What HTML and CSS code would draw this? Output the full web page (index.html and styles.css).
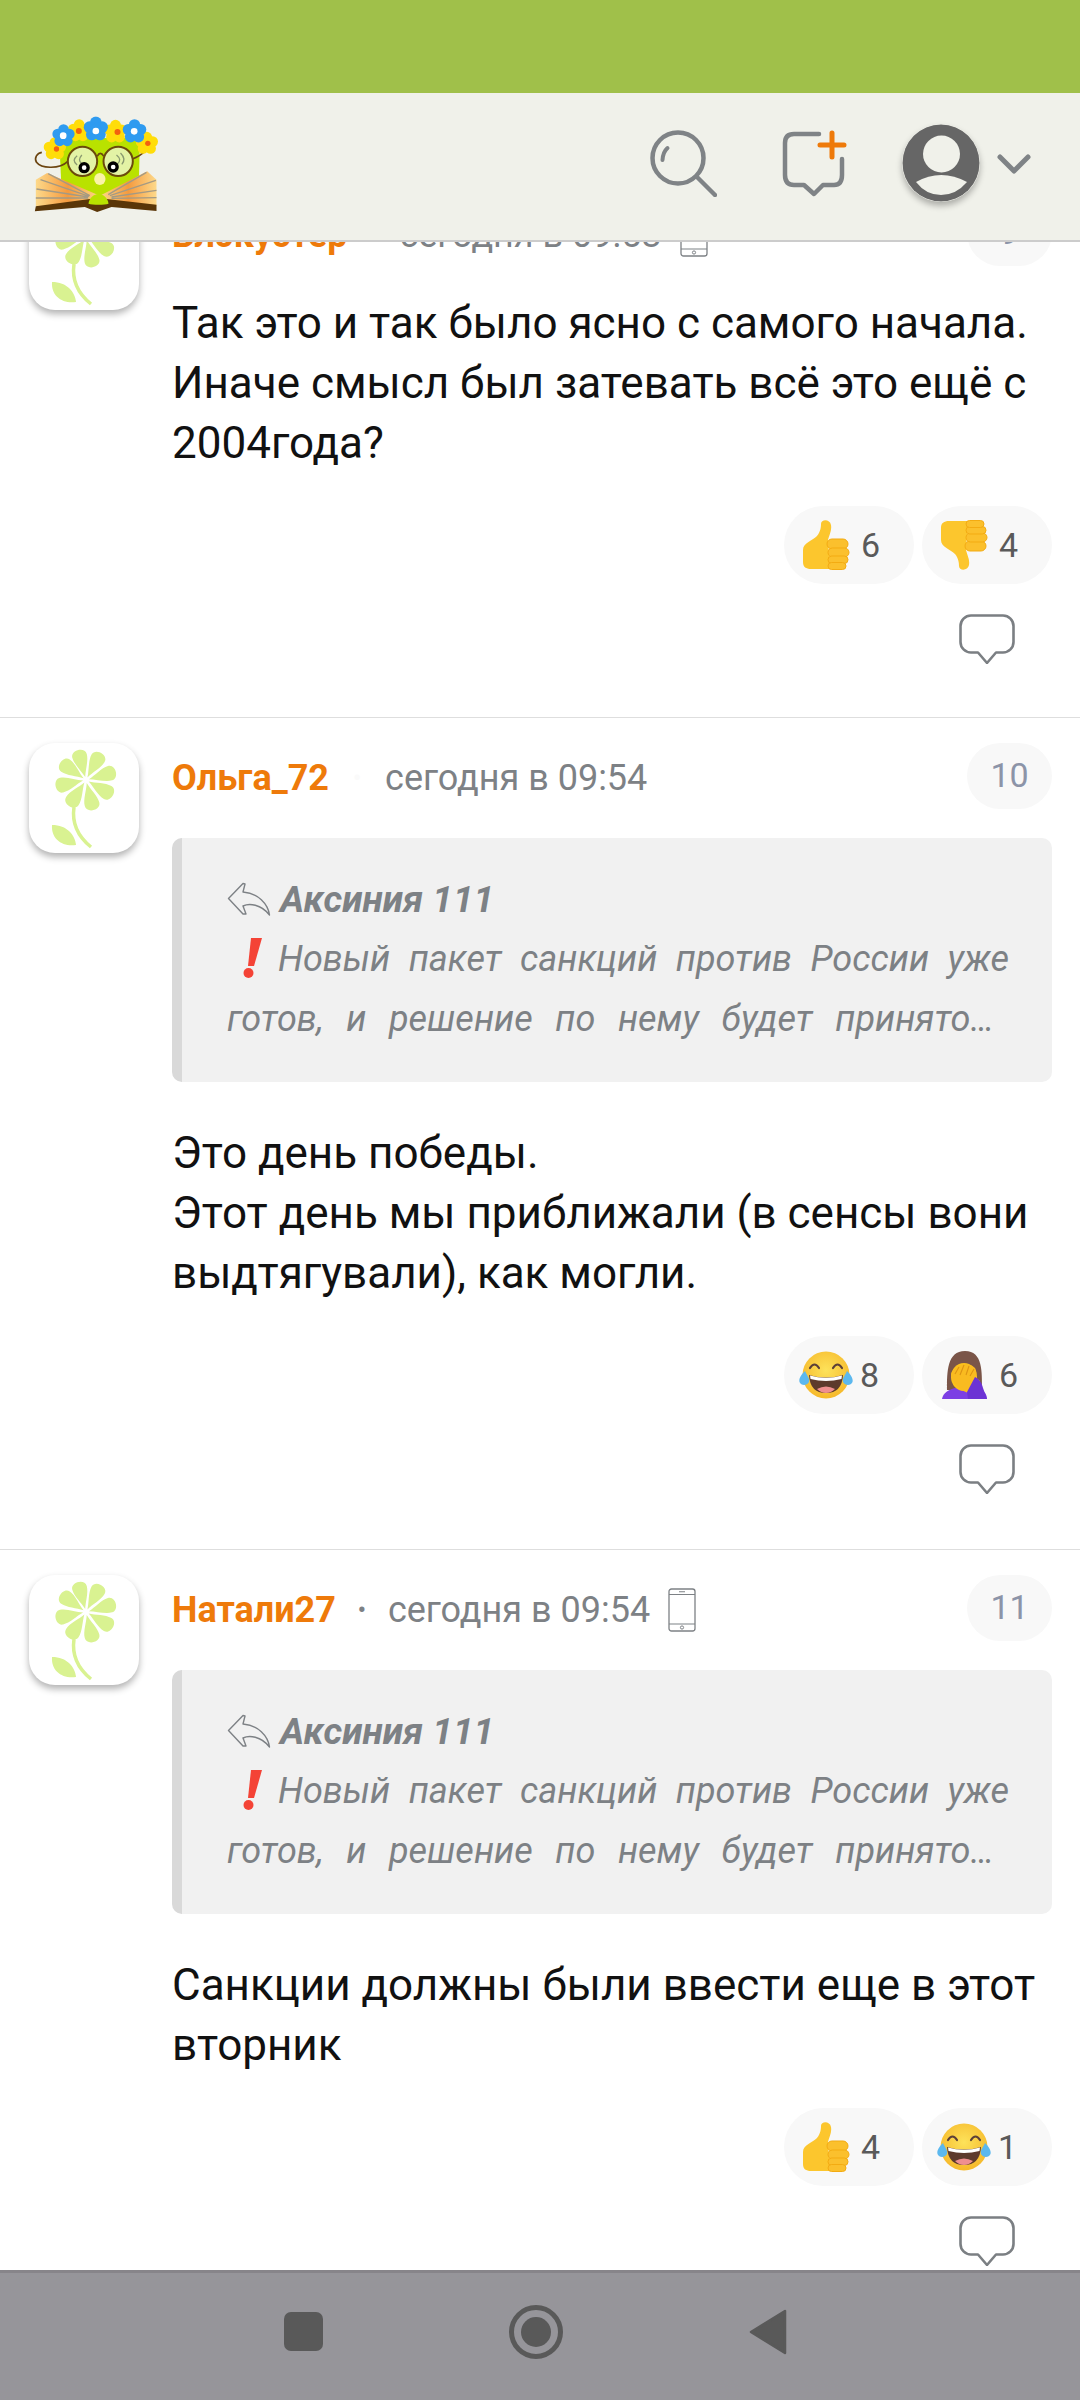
FILE: index.html
```html
<!DOCTYPE html>
<html lang="ru">
<head>
<meta charset="utf-8">
<title>Комментарии</title>
<link rel="stylesheet" href="styles.css">
</head>
<body>
<svg class="sprite" aria-hidden="true">
  <defs>
    <path id="petal" d="M0-3C-2-10-7.500-18-7.500-25-7.500-33 7.500-33 7.500-25 7.500-18 2-10 0-3Z"/>
    <symbol id="flower" viewBox="0 0 110 110">
      <g transform="translate(57 37)" fill="#d9f291">
        <use href="#petal" transform="rotate(-15)"/>
        <use href="#petal" transform="rotate(29)"/>
        <use href="#petal" transform="rotate(74)"/>
        <use href="#petal" transform="rotate(120)"/>
        <use href="#petal" transform="rotate(166)"/>
        <use href="#petal" transform="rotate(213)"/>
        <use href="#petal" transform="rotate(258)"/>
        <use href="#petal" transform="rotate(305)"/>
      </g>
      <path d="M45 64C43 78 47 92 62 104" fill="none" stroke="#d9f291" stroke-width="3.500"/>
      <path d="M23 82C38 82 46 92 47 102 33 104 22 96 23 82Z" fill="#d9f291"/>
    </symbol>

    <g id="hand">
      <path d="M1 30C1 23 10 21 15 16 19 11 19 6 19 4 19-1 28-1 29 5 30 11 27 15 26 20L28 49 9 49C4 49 1 47 1 42Z" fill="#fcc62d"/>
      <g fill="#fbc02d" stroke="#f3ab12" stroke-width="1">
        <rect x="25" y="19" width="21" height="10" rx="5"/>
        <rect x="26" y="28" width="21" height="9" rx="4.500"/>
        <rect x="26" y="36" width="20" height="7.500" rx="3.700"/>
        <rect x="26" y="42.500" width="18" height="7" rx="3.500"/>
      </g>
    </g>
    <symbol id="thumb" viewBox="0 0 48 50">
      <use href="#hand"/>
    </symbol>
    <symbol id="thumb-down" viewBox="0 0 48 50">
      <use href="#hand" transform="translate(0 50) scale(1 -1)"/>
    </symbol>

    <radialGradient id="joyface" cx="50%" cy="40%" r="60%">
      <stop offset="0" stop-color="#fde25a"/>
      <stop offset="1" stop-color="#f6b92b"/>
    </radialGradient>
    <symbol id="joy" viewBox="0 0 54 48">
      <circle cx="27" cy="24" r="23.500" fill="url(#joyface)"/>
      <path d="M11 17Q15.500 10 20 17M34 17Q38.500 10 43 17" fill="none" stroke="#5d4037" stroke-width="2.200" stroke-linecap="round"/>
      <path d="M10 24Q27 29 44 24 43 42 27 42 11 42 10 24Z" fill="#5d3a2c"/>
      <path d="M11 24.500Q27 29 43 24.500L42.500 28Q27 32 11.500 28Z" fill="#fff"/>
      <path d="M18 38Q27 33 36 38 32 42 27 42 22 42 18 38Z" fill="#ef8f8f"/>
      <path d="M6 20C8 25 11 27 10 31 8 35 2 35 .5 31-.5 27 3 23 6 20Z" fill="#5cb8ee"/>
      <path d="M48 20C46 25 43 27 44 31 46 35 52 35 53.500 31 54.500 27 51 23 48 20Z" fill="#5cb8ee"/>
    </symbol>

    <symbol id="facepalm" viewBox="0 0 46 50">
      <path d="M5 40C5 22 5 1 23 1 41 1 40 22 40 40Z" fill="#7a5548"/>
      <path d="M0 49C1 43 6 40 13 38H30L40 40C43 42 45 45 45 49Z" fill="#7c3fe4"/>
      <ellipse cx="22" cy="27" rx="13" ry="14" fill="#fcc21b"/>
      <path d="M9 24C12 15 26 11 33 18 36 23 33 29 30 33L22 41 15 36C12 33 9 29 9 24Z" fill="#f9bb20"/>
      <path d="M13 24 17 17M18 25 22 15M24 25 27 16M28 26 32 19" stroke="#dd9413" stroke-width="1.100" fill="none"/>
      <path d="M17 39 33 27 38 31 26 43Z" fill="#f9bb20"/>
      <path d="M33 27C37 29 40 33 41 38L45 49H26L25 42Z" fill="#6c33d4"/>
    </symbol>

    <symbol id="alert" viewBox="0 0 20 42">
      <path d="M8 1 19 1 11 29 5 29Z" fill="#f44336"/>
      <circle cx="5.500" cy="36" r="5" fill="#f44336"/>
    </symbol>

    <symbol id="reply" viewBox="0 0 44 34">
      <path d="M16 1.500 1.500 16.500 16 32 19 32 16 24C22 21 34 22 42.500 33 41 22 31 11 16 10L18 2Z" fill="none" stroke="#7d8185" stroke-width="1.400" stroke-linejoin="round"/>
    </symbol>

    <symbol id="phone" viewBox="0 0 28 44">
      <rect x="1" y="1" width="26" height="42" rx="2.500" fill="none" stroke="#7d8185" stroke-width="1.300"/>
      <path d="M1 6.500H27M1 36H27M11 3.700H17" stroke="#7d8185" stroke-width="1.100" fill="none"/>
      <circle cx="14" cy="39.500" r="1.600" fill="none" stroke="#7d8185" stroke-width="1"/>
    </symbol>

    <symbol id="bubble" viewBox="0 0 56 50">
      <path d="M12 1.500H44A10.500 10.500 0 0 1 54.500 12V28A10.500 10.500 0 0 1 44 38.500H37L28 49 19 38.500H12A10.500 10.500 0 0 1 1.500 28V12A10.500 10.500 0 0 1 12 1.500Z" fill="none" stroke="#7b7f83" stroke-width="2.600" stroke-linejoin="round"/>
    </symbol>

    <symbol id="bloom" viewBox="-34 -34 68 68">
      <circle cx="0" cy="-18" r="15.500"/>
      <circle cx="17" cy="-5" r="15.500"/>
      <circle cx="11" cy="15" r="15.500"/>
      <circle cx="-11" cy="15" r="15.500"/>
      <circle cx="-17" cy="-5" r="15.500"/>
      <circle cx="0" cy="0" r="15"/>
    </symbol>
  </defs>
</svg>

<div class="app">
  <div class="status-bar"></div>

  <header class="topbar">
    <svg class="logo" viewBox="100 150 380 300" role="img" aria-label="Логотип">
      <defs>
        <linearGradient id="pageglow" x1="0" y1="0" x2="1" y2="0">
          <stop offset="0" stop-color="#fdd98a"/>
          <stop offset=".5" stop-color="#f59a3e"/>
          <stop offset="1" stop-color="#fdd98a"/>
        </linearGradient>
      </defs>
      <path d="M178 225H408Q420 225 420 240L416 400H186Z" fill="#b9e200"/>
      <path d="M204 295C180 318 125 318 110 298 102 284 112 270 126 268" fill="none" stroke="#6b4410" stroke-width="5"/>
      <path d="M398 288Q420 280 436 264" fill="none" stroke="#6b4410" stroke-width="5"/>
      <circle cx="248" cy="295" r="44" fill="#e3f3a5" stroke="#6b4a0c" stroke-width="6"/>
      <circle cx="355" cy="295" r="44" fill="#e3f3a5" stroke="#6b4a0c" stroke-width="6"/>
      <path d="M292 280Q301 262 312 280" fill="none" stroke="#6b4a0c" stroke-width="5"/>
      <path d="M232 278Q214 292 232 306M246 276Q232 292 246 302M350 276Q368 290 352 304M362 270Q380 288 366 304" fill="none" stroke="#8a9a70" stroke-width="4"/>
      <circle cx="253" cy="314" r="17" fill="#000"/>
      <circle cx="253" cy="314" r="7" fill="#fff"/>
      <circle cx="340" cy="312" r="17" fill="#000"/>
      <circle cx="340" cy="312" r="7" fill="#fff"/>
      <path d="M108 350 142 330 300 398 270 425 108 430Z" fill="url(#pageglow)"/>
      <path d="M470 350 442 325 300 398 320 425 470 430Z" fill="url(#pageglow)"/>
      <path d="M145 332 270 398M122 350 268 400M110 378 265 402M108 405 265 405M440 328 325 395M468 352 330 398M470 382 335 402M470 404 335 406" stroke="#a49a84" stroke-width="4" fill="none"/>
      <ellipse cx="300" cy="348" rx="17" ry="18" fill="#fbf3a8"/>
      <path d="M105 445 108 430 270 408 320 408 470 425V444L335 432 292 447 255 432Z" fill="#5a3608"/>
      <path d="M266 422C268 405 282 393 296 393 310 393 324 405 326 422 315 426 278 426 266 422Z" fill="#b9e200"/>
      <g fill="#ffdd0a">
        <use href="#bloom" x="130" y="222" width="70" height="70"/>
        <use href="#bloom" x="203" y="168" width="70" height="70"/>
        <use href="#bloom" x="311" y="168" width="72" height="76"/>
        <use href="#bloom" x="406" y="202" width="70" height="78"/>
      </g>
      <g fill="#2f9bf0">
        <use href="#bloom" x="156" y="183" width="70" height="70"/>
        <use href="#bloom" x="250" y="160" width="76" height="76"/>
        <use href="#bloom" x="366" y="168" width="76" height="74"/>
      </g>
      <g fill="#f2610f">
        <circle cx="170" cy="258" r="8"/><circle cx="237" cy="204" r="9"/><circle cx="353" cy="207" r="9"/><circle cx="444" cy="241" r="8"/>
      </g>
      <g fill="#fff">
        <circle cx="190" cy="218" r="10"/><circle cx="288" cy="204" r="10"/><circle cx="403" cy="205" r="10"/>
      </g>
    </svg>

    <div class="topbar-actions">
      <svg class="ic-search" viewBox="0 0 67 67" aria-label="Поиск">
        <circle cx="28" cy="28" r="25.500" fill="none" stroke="#7f8386" stroke-width="4.500"/>
        <path d="M47 47 65 65" stroke="#7f8386" stroke-width="4.500" stroke-linecap="round"/>
        <path d="M17.500 18Q13 22 12.500 30" fill="none" stroke="#7f8386" stroke-width="4" stroke-linecap="round"/>
      </svg>
      <svg class="ic-add" viewBox="0 0 66 68" aria-label="Новая запись">
        <path d="M37 4H12Q3 4 3 13V45Q3 55 12 55H22L32 64 41 55H52Q60 55 60 45V29" fill="none" stroke="#7f8386" stroke-width="4.500" stroke-linecap="round" stroke-linejoin="round"/>
        <path d="M38 15H62M50 3V27" stroke="#ee7a0a" stroke-width="5" stroke-linecap="round"/>
      </svg>
      <svg class="ic-user" viewBox="0 0 78 78" aria-label="Профиль">
        <circle cx="39" cy="39" r="38.500" fill="#666"/>
        <circle cx="39.500" cy="30" r="18.500" fill="#f0f1ea"/>
        <path d="M14 58Q39 44 65 58 54 71 39 71 24 71 14 58Z" fill="#f0f1ea"/>
      </svg>
      <svg class="ic-chevron" viewBox="0 0 34 20" aria-hidden="true">
        <path d="M3 3 17 17 31 3" fill="none" stroke="#7f8386" stroke-width="5" stroke-linecap="round" stroke-linejoin="round"/>
      </svg>
    </div>
  </header>

  <main class="feed">
    <article class="comment comment-first">
      <svg class="avatar"><use href="#flower"/></svg>
      <div class="content">
        <div class="meta">
          <span class="author">Блэкустер</span>
          <span class="dot dot-faint">•</span>
          <span class="time">сегодня в 09:53</span>
          <svg class="device"><use href="#phone"/></svg>
          <span class="number">9</span>
        </div>
        <p class="text">Так это и так было ясно с самого начала.<br>Иначе смысл был затевать всё это ещё с 2004года?</p>
        <div class="reactions">
          <span class="pill"><svg class="emoji"><use href="#thumb"/></svg><span class="count">6</span></span>
          <span class="pill"><svg class="emoji"><use href="#thumb-down"/></svg><span class="count">4</span></span>
        </div>
        <svg class="reply-bubble"><use href="#bubble"/></svg>
      </div>
    </article>

    <article class="comment">
      <svg class="avatar"><use href="#flower"/></svg>
      <div class="content">
        <div class="meta">
          <span class="author">Ольга_72</span>
          <span class="dot dot-faint dot-wide">•</span>
          <span class="time">сегодня в 09:54</span>
          <span class="number">10</span>
        </div>
        <blockquote class="quote">
          <div class="quote-head"><svg class="quote-arrow"><use href="#reply"/></svg><b>Аксиния 111</b></div>
          <p class="quote-text">
            <span class="quote-line"><svg class="alert"><use href="#alert"/></svg>Новый пакет санкций против России уже</span>
            <span class="quote-line quote-line-last">готов, и решение по нему будет принято…</span>
          </p>
        </blockquote>
        <p class="text">Это день победы.<br>Этот день мы приближали (в сенсы вони выдтягували), как могли.</p>
        <div class="reactions">
          <span class="pill"><svg class="emoji emoji-wide"><use href="#joy"/></svg><span class="count">8</span></span>
          <span class="pill"><svg class="emoji emoji-palm"><use href="#facepalm"/></svg><span class="count">6</span></span>
        </div>
        <svg class="reply-bubble"><use href="#bubble"/></svg>
      </div>
    </article>

    <article class="comment">
      <svg class="avatar"><use href="#flower"/></svg>
      <div class="content">
        <div class="meta">
          <span class="author">Натали27</span>
          <span class="dot">•</span>
          <span class="time">сегодня в 09:54</span>
          <svg class="device"><use href="#phone"/></svg>
          <span class="number">11</span>
        </div>
        <blockquote class="quote">
          <div class="quote-head"><svg class="quote-arrow"><use href="#reply"/></svg><b>Аксиния 111</b></div>
          <p class="quote-text">
            <span class="quote-line"><svg class="alert"><use href="#alert"/></svg>Новый пакет санкций против России уже</span>
            <span class="quote-line quote-line-last">готов, и решение по нему будет принято…</span>
          </p>
        </blockquote>
        <p class="text">Санкции должны были ввести еще в этот вторник</p>
        <div class="reactions">
          <span class="pill"><svg class="emoji"><use href="#thumb"/></svg><span class="count">4</span></span>
          <span class="pill"><svg class="emoji emoji-wide"><use href="#joy"/></svg><span class="count">1</span></span>
        </div>
        <svg class="reply-bubble"><use href="#bubble"/></svg>
      </div>
    </article>
  </main>

  <nav class="navbar">
    <span class="nav-square"></span>
    <span class="nav-home"></span>
    <svg class="nav-back" viewBox="0 0 38 46" aria-label="Назад"><path d="M36 2V44L2 23Z" fill="#595959" stroke="#595959" stroke-width="2.500" stroke-linejoin="round"/></svg>
  </nav>
</div>
</body>
</html>
```

FILE: styles.css
```css
* { box-sizing: border-box; }

html, body {
  margin: 0;
  padding: 0;
  background: #fff;
}

body {
  font-family: Roboto, "Noto Sans", sans-serif;
  color: #111;
}

.sprite {
  position: absolute;
  width: 0;
  height: 0;
}

.app {
  width: 1080px;
  height: 2400px;
  display: flex;
  flex-direction: column;
  overflow: hidden;
}

.status-bar {
  flex: 0 0 93px;
  background: #a0c04a;
}

.topbar {
  flex: 0 0 149px;
  position: relative;
  z-index: 2;
  display: flex;
  align-items: flex-start;
  padding: 20px 49px 0 33px;
  background: #f0f1ea;
  border-bottom: 2px solid #ccc;
}

.logo {
  width: 127px;
  height: 100px;
}

.topbar-actions {
  margin-left: auto;
  display: flex;
  align-items: flex-start;
}

.ic-search {
  width: 67px;
  height: 67px;
  margin-top: 17px;
}

.ic-add {
  width: 66px;
  height: 68px;
  margin: 17px 0 0 65px;
}

.ic-user {
  width: 78px;
  height: 78px;
  margin: 11px 0 0 54px;
  border-radius: 50%;
  box-shadow: 0 4px 6px rgba(0, 0, 0, .28);
}

.ic-chevron {
  width: 34px;
  height: 20px;
  margin: 41px 0 0 17px;
}

.feed {
  flex: 1 1 0;
  min-height: 0;
  margin-top: -67px;
  overflow: hidden;
}

.comment {
  display: grid;
  grid-template-columns: 110px 1fr;
  column-gap: 33px;
  padding: 25px 28px 55px 29px;
  border-bottom: 1px solid #dedede;
}

.comment-first {
  padding-bottom: 53px;
}

.avatar {
  width: 110px;
  height: 110px;
  background: #fff;
  border-radius: 26px;
  box-shadow: 0 4px 7px rgba(0, 0, 0, .3);
}

.content {
  min-width: 0;
  display: flex;
  flex-direction: column;
}

.meta {
  height: 70px;
  display: flex;
  align-items: center;
  margin-bottom: 25px;
  font-size: 36px;
}

.comment-first .meta {
  margin-bottom: 23px;
}

.author {
  font-weight: 700;
  color: #ee7a0a;
}

.dot {
  width: 52px;
  text-align: center;
  color: #7d8185;
  font-size: 26px;
}

.dot-wide {
  width: 56px;
}

.dot-faint {
  color: #fafafa;
}

.time {
  color: #7d8185;
}

.device {
  width: 28px;
  height: 44px;
  margin-left: 18px;
}

.number {
  margin-left: auto;
  align-self: flex-start;
  width: 85px;
  height: 66px;
  border-radius: 33px;
  background: #f8f8f8;
  color: #8c94a8;
  font-size: 34px;
  line-height: 64px;
  text-align: center;
}

.quote {
  margin: 0 0 41px;
  height: 244px;
  padding: 37px 43px 0 45px;
  background: #f1f1f1;
  border-left: 10px solid #d9d9d9;
  border-radius: 10px;
  color: #7d8185;
  font-size: 36px;
  font-style: italic;
}

.quote-head {
  display: flex;
  align-items: center;
  height: 48px;
  margin-bottom: 6px;
  font-size: 37px;
}

.quote-arrow {
  width: 44px;
  height: 34px;
  margin-right: 9px;
  flex: none;
}

.quote-text {
  margin: 0;
  line-height: 60px;
}

.quote-line {
  display: block;
  text-align: justify;
  text-align-last: justify;
}

.quote-line-last {
  margin-right: 15px;
}

.alert {
  width: 20px;
  height: 42px;
  margin: 0 15px 0 16px;
  vertical-align: -8px;
}

.text {
  margin: 0;
  font-size: 44px;
  line-height: 60px;
  color: #111;
}

.reactions {
  display: flex;
  justify-content: flex-end;
  gap: 8px;
  margin-top: 33px;
}

.pill {
  width: 130px;
  height: 78px;
  display: flex;
  align-items: center;
  padding-left: 18px;
  border-radius: 39px;
  background: #f8f8f8;
}

.emoji {
  width: 48px;
  height: 50px;
  flex: none;
}

.emoji-wide {
  width: 54px;
  height: 48px;
  margin-left: -3px;
}

.emoji-palm {
  width: 46px;
  height: 50px;
  margin-left: 2px;
}

.count {
  margin-left: 11px;
  font-size: 34px;
  color: #5a5a5a;
}

.emoji-wide + .count {
  margin-left: 7px;
}

.emoji-palm + .count {
  margin-left: 11px;
}

.reply-bubble {
  width: 56px;
  height: 50px;
  margin: 30px 37px 0 auto;
}

.navbar {
  flex: 0 0 130px;
  position: relative;
  z-index: 2;
  display: flex;
  align-items: flex-start;
  padding: 32px 0 0 284px;
  background: #96959a;
  border-top: 3px solid #87858a;
}

.nav-square {
  width: 39px;
  height: 39px;
  margin-top: 7px;
  background: #595959;
  border-radius: 7px;
}

.nav-home {
  position: relative;
  width: 54px;
  height: 54px;
  margin-left: 186px;
  border: 5px solid #595959;
  border-radius: 50%;
}

.nav-home::after {
  content: "";
  position: absolute;
  inset: 7px;
  background: #595959;
  border-radius: 50%;
}

.nav-back {
  width: 38px;
  height: 46px;
  margin: 4px 0 0 186px;
}
```
